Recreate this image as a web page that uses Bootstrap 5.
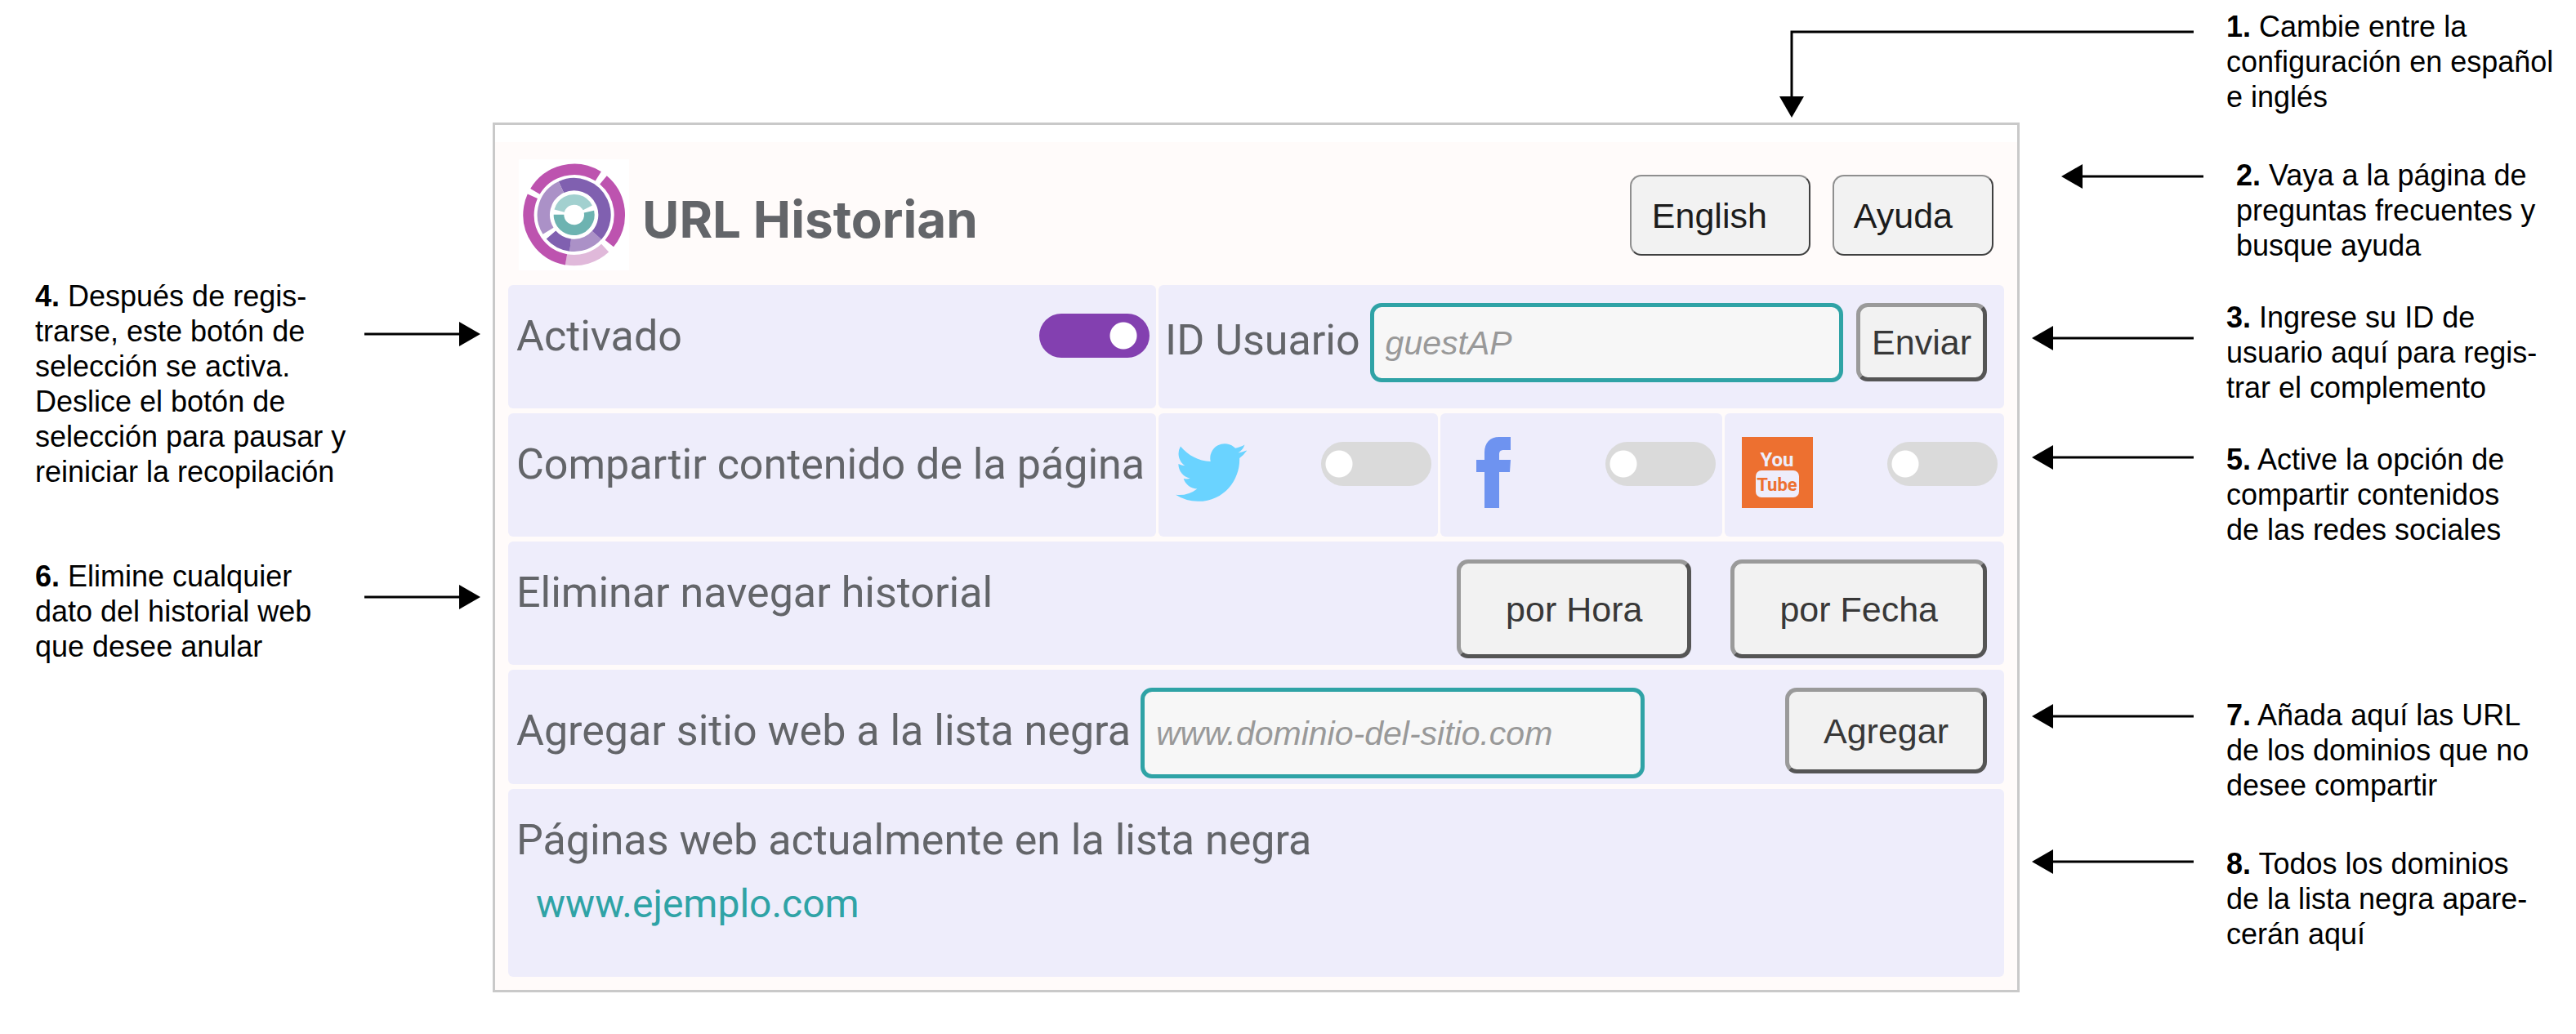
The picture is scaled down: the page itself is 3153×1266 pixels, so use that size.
<!DOCTYPE html>
<html lang="es">
<head>
<meta charset="utf-8">
<meta name="viewport" content="width=device-width, initial-scale=1">
<title>URL Historian</title>
<link href="https://cdn.jsdelivr.net/npm/bootstrap@5.3.0/dist/css/bootstrap.min.css" rel="stylesheet">
<style>
  body { font-family: "Liberation Sans", Arial, sans-serif; color: #000; background: #fff; }

  /* Notes | panel | notes */
  .guide { display: grid; grid-template-columns: 603fr 1869fr 681fr; }
  .notes-left { padding: 341px 15px 0 43px; }
  .notes-right { padding: 11px 0 0 15px; }
  .note { display: flex; font-size: 36px; line-height: 43px; white-space: nowrap; }
  .note p { margin: 0; }
  .notes-right .note { gap: 40px; }
  .note svg { flex: none; display: block; }
  .drop-a { margin-top: 4px; }
  .drop-b { margin-top: 8px; }
  .drop-c { margin-top: 32px; }
  .drop-d { margin-top: 53px; }
  .space-s { margin-top: 45px; }
  .space-m { margin-top: 53px; }
  .space-l { margin-top: 85px; }
  .space-xl { margin-top: 184px; }
  .note-first { padding-left: 238px; }
  .note-inset { padding-left: 36px; }
  .elbow { position: absolute; left: -309px; top: 17px; }

  /* Extension panel */
  .panel { margin-top: 150px; border: 3px solid #c9c9c9; background: #fffbfa; font-family: Inter, Roboto, sans-serif; color: #636569; }
  .panel-head { border-top: 21px solid #fff; padding: 21px 29px 18px; }
  .brand-name { font-size: 62px; line-height: 72px; font-weight: 700; padding-top: 12px; }
  .panel-body { padding: 0 16px 16px; display: grid; gap: 6px; }
  .line { display: grid; gap: 3px; grid-template-columns: minmax(0, 793fr) minmax(0, 342fr) minmax(0, 345fr) minmax(0, 342fr); }
  .tile { background: #eeedfb; border-radius: 6px; min-height: 151px; padding: 22px 21px 7px 10px; }
  .tile-wide { grid-column: 1 / -1; }
  .tile-three { grid-column: span 3; padding-left: 8px; }
  .tile-sw { padding: 22px 8px 0 21px; }
  .tile-sw label { margin-top: 7px; }
  .tile-act { padding-right: 8px; }
  .tile-add { min-height: 140px; }
  .tile-list { min-height: 230px; }
  .txt { font-family: Roboto, Inter, sans-serif; font-size: 52px; line-height: 64px; font-weight: 400; white-space: nowrap; margin: 9px 0 0; }
  .txt-gap { margin-right: 12px; }
  .txt-site { font-family: Roboto, Inter, sans-serif; font-size: 48px; line-height: 64px; margin: 14px 0 0 24px; color: #2fa3a6; text-decoration: none; display: inline-block; }

  .key { font-family: "Liberation Sans", Arial, sans-serif; font-size: 43px; line-height: 50px; color: #383838; background: #f2f2f2; border: 5px solid; border-color: #9a9a9a #555 #555 #9a9a9a; border-radius: 14px; padding: 18px 14px; white-space: nowrap; }
  .key-head { color: #1c1c1c; border-width: 2px; border-color: #8f8f8f #404040 #404040 #8f8f8f; padding: 23px 48px 22px 24px; text-align: left; }
  .key-lang { min-width: 221px; padding-left: 25px; }
  .head-keys { gap: 27px; }
  .key-tall { padding: 31px 55px 30px; }
  .key-add { padding: 23px 42px 22px; }
  .entry { font-family: "Liberation Sans", Arial, sans-serif; font-size: 41px; line-height: 46px; background: #f7f7f7; border: 5px solid #2fa3a6; border-radius: 14px; padding: 21px 14px 20px; min-width: 0; }
  .entry::placeholder { color: #999; font-style: italic; opacity: 1; }
  .entry-site { flex: 0 1 617px; padding: 28px 14px 27px; }

  .switch { appearance: none; flex: none; width: 135px; height: 54px; margin: 13px 0 0; border-radius: 27px; background: #dadada radial-gradient(circle closest-side, #fff 94%, transparent) no-repeat 5px 10px / 34px 34px; }
  .switch:checked { background-color: #8340b0; background-position: 86px 10px; }
</style>
</head>
<body>
<svg width="0" height="0" class="position-absolute" aria-hidden="true">
  <defs>
    <symbol id="arrow-left" viewBox="0 0 198 30"><path d="M0 15 26 0V30Z"/><path d="M24 15H198" stroke="#000" stroke-width="3"/></symbol>
    <symbol id="arrow-right" viewBox="0 0 142 30"><path d="M142 15 116 0V30Z"/><path d="M0 15H118" stroke="#000" stroke-width="3"/></symbol>
  </defs>
</svg>

<div class="guide">
  <aside class="notes-left">
    <div class="note justify-content-between">
      <p><b>4.</b> Después de regis-<br>trarse, este botón de<br>selección se activa.<br>Deslice el botón de<br>selección para pausar y<br>reiniciar la recopilación</p>
      <svg class="drop-d" width="142" height="30"><use href="#arrow-right"/></svg>
    </div>
    <div class="note justify-content-between space-l">
      <p><b>6.</b> Elimine cualquier<br>dato del historial web<br>que desee anular</p>
      <svg class="drop-c" width="142" height="30"><use href="#arrow-right"/></svg>
    </div>
  </aside>

  <main>
    <section class="panel">
      <header class="panel-head d-flex align-items-center">
        <svg width="135" height="136" viewBox="15 15 405 408" role="img" aria-label="Logotipo de URL Historian">
          <path fill="#fff" d="M15 15h405v408H15z"/>
          <g fill="none" stroke-width="40">
            <circle cx="218" cy="219" r="167" pathLength="360" stroke="#bd53af" stroke-dasharray="91 269" transform="rotate(-149 218 219)"/>
            <circle cx="218" cy="219" r="167" pathLength="360" stroke="#bd53af" stroke-dasharray="89 271" transform="rotate(-50 218 219)"/>
            <circle cx="218" cy="219" r="167" pathLength="360" stroke="#e0b9da" stroke-dasharray="53 307" transform="rotate(47 218 219)"/>
            <circle cx="218" cy="219" r="167" pathLength="360" stroke="#bd53af" stroke-dasharray="104 256" transform="rotate(100 218 219)"/>
          </g>
          <g fill="none" stroke-width="46">
            <circle cx="218" cy="219" r="112" pathLength="360" stroke="#8060b0" stroke-dasharray="157 203" transform="rotate(-115 218 219)"/>
            <circle cx="218" cy="219" r="112" pathLength="360" stroke="#ab91c7" stroke-dasharray="55 305" transform="rotate(42 218 219)"/>
            <circle cx="218" cy="219" r="112" pathLength="360" stroke="#8060b0" stroke-dasharray="42 318" transform="rotate(97 218 219)"/>
            <circle cx="218" cy="219" r="112" pathLength="360" stroke="#ab91c7" stroke-dasharray="97 263" transform="rotate(148 218 219)"/>
          </g>
          <g fill="none" stroke-width="38">
            <circle cx="218" cy="219" r="56" pathLength="360" stroke="#a2d0cf" stroke-dasharray="137 223" transform="rotate(-165 218 219)"/>
            <circle cx="218" cy="219" r="56" pathLength="360" stroke="#6db3b1" stroke-dasharray="192 168" transform="rotate(-12 218 219)"/>
          </g>
        </svg>
        <h1 class="brand-name mb-0 ms-3">URL Historian</h1>
        <div class="head-keys d-flex ms-auto">
          <button type="button" class="key key-head key-lang">English</button>
          <button type="button" class="key key-head">Ayuda</button>
        </div>
      </header>

      <div class="panel-body">
        <div class="line">
          <div class="tile tile-act d-flex justify-content-between align-items-start">
            <label class="txt" for="active">Activado</label>
            <input class="switch" type="checkbox" role="switch" id="active" checked>
          </div>
          <form class="tile tile-three d-flex align-items-start">
            <div class="d-flex align-items-baseline flex-grow-1">
              <label class="txt txt-gap" for="user">ID Usuario</label>
              <input class="entry flex-grow-1 me-3" type="text" id="user" placeholder="guestAP">
            </div>
            <button type="button" class="key">Enviar</button>
          </form>
        </div>

        <div class="line">
          <div class="tile"><p class="txt">Compartir contenido de la página</p></div>
          <div class="tile tile-sw d-flex justify-content-between align-items-start">
            <label for="tw"><svg width="87" height="87" viewBox="0 0 24 24" role="img" aria-label="Twitter"><path fill="#6ad3ff" d="M23.953 4.57a10 10 0 01-2.825.775 4.958 4.958 0 002.163-2.723c-.951.555-2.005.959-3.127 1.184a4.92 4.92 0 00-8.384 4.482C7.69 8.095 4.067 6.13 1.64 3.162a4.822 4.822 0 00-.666 2.475c0 1.71.87 3.213 2.188 4.096a4.904 4.904 0 01-2.228-.616v.06a4.923 4.923 0 003.946 4.827 4.996 4.996 0 01-2.212.085 4.936 4.936 0 004.604 3.417 9.867 9.867 0 01-6.102 2.105c-.39 0-.779-.023-1.17-.067a13.995 13.995 0 007.557 2.209c9.053 0 13.998-7.496 13.998-13.985 0-.21 0-.42-.015-.63A9.935 9.935 0 0024 4.59z"/></svg></label>
            <input class="switch" type="checkbox" role="switch" id="tw">
          </div>
          <div class="tile tile-sw d-flex justify-content-between align-items-start">
            <label for="fb"><svg width="87" height="87" viewBox="0 0 87 87" role="img" aria-label="Facebook"><path fill="#6e93f0" d="M33 87V43H23V28H33V19C33 7 40 0 51 0H65V16H57C52 16 51 18 51 22V28H65L64 43H51V87Z"/></svg></label>
            <input class="switch" type="checkbox" role="switch" id="fb">
          </div>
          <div class="tile tile-sw d-flex justify-content-between align-items-start">
            <label for="yt"><svg width="87" height="87" viewBox="0 0 87 87" role="img" aria-label="YouTube"><path fill="#ed7030" d="M0 0h87v87H0z"/><rect x="17" y="41" width="53" height="33" rx="7" fill="#eeedfb"/><g font-family="Liberation Sans Narrow, Roboto, sans-serif" font-weight="700" text-anchor="middle"><text x="43" y="36" font-size="24" fill="#eeedfb">You</text><text x="43" y="66" font-size="22" fill="#ed7030">Tube</text></g></svg></label>
            <input class="switch" type="checkbox" role="switch" id="yt">
          </div>
        </div>

        <div class="line">
          <div class="tile tile-wide d-flex align-items-start">
            <p class="txt me-auto">Eliminar navegar historial</p>
            <button type="button" class="key key-tall me-5">por Hora</button>
            <button type="button" class="key key-tall">por Fecha</button>
          </div>
        </div>

        <div class="line">
          <form class="tile tile-wide tile-add d-flex align-items-start">
            <div class="d-flex align-items-baseline flex-grow-1">
              <label class="txt txt-gap" for="site">Agregar sitio web a la lista negra</label>
              <input class="entry entry-site" type="text" id="site" placeholder="www.dominio-del-sitio.com">
            </div>
            <button type="button" class="key key-add">Agregar</button>
          </form>
        </div>

        <div class="line">
          <div class="tile tile-wide tile-list">
            <h2 class="txt">Páginas web actualmente en la lista negra</h2>
            <a class="txt-site" href="#">www.ejemplo.com</a>
          </div>
        </div>
      </div>
    </section>
  </main>

  <aside class="notes-right">
    <div class="note note-first position-relative">
      <svg class="elbow" width="507" height="116"><path d="M507 11H15V92" fill="none" stroke="#000" stroke-width="3"/><path d="M15 116 0 90H30Z"/></svg>
      <p><b>1.</b> Cambie entre la<br>configuración en español<br>e inglés</p>
    </div>
    <div class="note note-inset space-m">
      <svg class="drop-b" width="174" height="30" viewBox="0 0 174 30"><path d="M0 15 26 0V30Z"/><path d="M24 15H174" stroke="#000" stroke-width="3"/></svg>
      <p><b>2.</b> Vaya a la página de<br>preguntas frecuentes y<br>busque ayuda</p>
    </div>
    <div class="note space-s">
      <svg class="drop-c" width="198" height="30"><use href="#arrow-left"/></svg>
      <p><b>3.</b> Ingrese su ID de<br>usuario aquí para regis-<br>trar el complemento</p>
    </div>
    <div class="note space-s">
      <svg class="drop-a" width="198" height="30"><use href="#arrow-left"/></svg>
      <p><b>5.</b> Active la opción de<br>compartir contenidos<br>de las redes sociales</p>
    </div>
    <div class="note space-xl">
      <svg class="drop-b" width="198" height="30"><use href="#arrow-left"/></svg>
      <p><b>7.</b> Añada aquí las URL<br>de los dominios que no<br>desee compartir</p>
    </div>
    <div class="note space-m">
      <svg class="drop-a" width="198" height="30"><use href="#arrow-left"/></svg>
      <p><b>8.</b> Todos los dominios<br>de la lista negra apare-<br>cerán aquí</p>
    </div>
  </aside>
</div>
<script src="https://cdn.jsdelivr.net/npm/bootstrap@5.3.0/dist/js/bootstrap.bundle.min.js"></script>
</body>
</html>
